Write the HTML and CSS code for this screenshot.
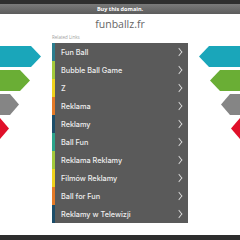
FILE: index.html
```html
<!DOCTYPE html>
<html lang="en">
  <head>
    <meta charset="UTF-8" />
    <meta name="viewport" content="width=device-width, initial-scale=1.0" />
    <title>funballz.fr</title>
    <link rel="stylesheet" href="styles.css">
  </head>
  <body>
    <div class="top-strip"></div>
    <div class="buy-bar">Buy this domain.</div>

    <svg class="arrows arrows-left" width="44" height="94" viewBox="0 0 44 94">
      <polygon points="0,0 31,0 41,10.5 31,21 0,21" fill="#1aa6ba" />
      <polygon points="0,24 20,24 30,34.5 20,45 0,45" fill="#6aae35" />
      <polygon points="0,48 10,48 19,58.5 10,69 0,69" fill="#858585" />
      <polygon points="0,72 0,72 9,82.5 0,93" fill="#e0102a" />
    </svg>
    <svg class="arrows arrows-right" width="44" height="94" viewBox="0 0 44 94">
      <polygon points="0,0 31,0 41,10.5 31,21 0,21" fill="#1aa6ba" />
      <polygon points="0,24 20,24 30,34.5 20,45 0,45" fill="#6aae35" />
      <polygon points="0,48 10,48 19,58.5 10,69 0,69" fill="#858585" />
      <polygon points="0,72 0,72 9,82.5 0,93" fill="#e0102a" />
    </svg>

    <h1 class="domain">funballz.fr</h1>

    <div class="links">
      <p class="links-title">Related Links</p>
      <ul class="link-list">
        <li class="c1"><a href="#">Fun Ball</a></li>
        <li class="c2"><a href="#">Bubble Ball Game</a></li>
        <li class="c3"><a href="#">Z</a></li>
        <li class="c4"><a href="#">Reklama</a></li>
        <li class="c5"><a href="#">Reklamy</a></li>
        <li class="c6"><a href="#">Ball Fun</a></li>
        <li class="c2"><a href="#">Reklama Reklamy</a></li>
        <li class="c3"><a href="#">Filmów Reklamy</a></li>
        <li class="c4"><a href="#">Ball for Fun</a></li>
        <li class="c5"><a href="#">Reklamy w Telewizji</a></li>
      </ul>
    </div>

    <div class="footer"></div>
  </body>
</html>
```

FILE: styles.css
```css
html,
body {
  margin: 0;
  height: 100%;
}

body {
  font-family: "Open Sans", Arial, sans-serif;
  background: #fff;
  display: flex;
  flex-direction: column;
  position: relative;
  overflow: hidden;
}

.top-strip {
  height: 4px;
  background: #2e2e2e;
}

.buy-bar {
  height: 10px;
  line-height: 10px;
  background: linear-gradient(#7a7a7a, #5c5c5c);
  color: #fff;
  font-size: 5.5px;
  font-weight: bold;
  text-align: center;
}

.domain {
  margin: 4px 0 0;
  font-size: 10.5px;
  font-weight: normal;
  color: #666;
  text-align: center;
  line-height: 12px;
}

.arrows {
  position: absolute;
  top: 46px;
}

.arrows-left {
  left: 0;
}

.arrows-right {
  right: 0;
  transform: scaleX(-1);
}

.links {
  width: 136px;
  margin: 0 auto;
}

.links-title {
  margin: 4px 0 3px;
  font-size: 4.5px;
  line-height: 6px;
  color: #a0a0a0;
}

.link-list {
  list-style: none;
  margin: 0;
  padding: 0;
  background: #5a5a5a;
}

.link-list li {
  height: 18px;
  border-left: 3px solid #777;
}

.link-list a {
  display: flex;
  align-items: center;
  height: 100%;
  padding: 0 6px 0 6px;
  color: #eeeeee;
  font-family: Inter, "Open Sans", sans-serif;
  font-size: 7.3px;
  font-weight: 500;
  text-decoration: none;
}

.link-list a::after {
  content: "";
  margin-left: auto;
  width: 5px;
  height: 5px;
  border-top: 0.8px solid #dcdcdc;
  border-right: 0.8px solid #dcdcdc;
  transform: scaleX(0.8) rotate(45deg);
}

.link-list .c1 { border-left-color: #2c7d8e; }
.link-list .c2 { border-left-color: #a3c93a; }
.link-list .c3 { border-left-color: #f0d21c; }
.link-list .c4 { border-left-color: #e57a26; }
.link-list .c5 { border-left-color: #1c4d69; }
.link-list .c6 { border-left-color: #2ba38a; }

.footer {
  margin-top: auto;
  height: 5px;
  background: #2e2e2e;
}
```
